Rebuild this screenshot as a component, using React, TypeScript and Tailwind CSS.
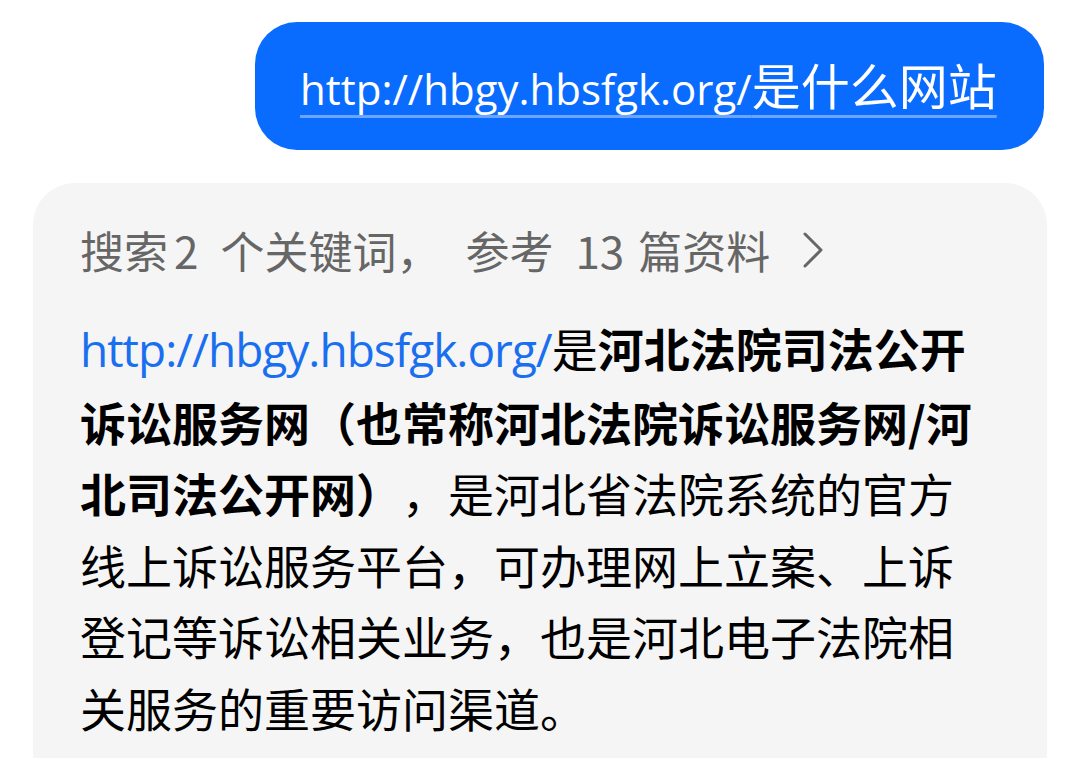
import React from 'react'

const cjk = "font-['Noto_Sans_CJK_SC',sans-serif]"

export default function App() {
  return (
    <div className={`min-h-[758px] w-[1080px] overflow-hidden bg-white ${cjk} [text-spacing-trim:space-all]`}>
      {/* user question bubble */}
      <div className="flex justify-end pr-[36px] pt-[22px]">
        <div className="flex h-[128px] w-[789px] items-center rounded-[42px] bg-[#0a6bff] pl-[45px]">
          <span className="text-[49px] leading-[60px] text-white underline decoration-[#6aa6ff] decoration-[3px] underline-offset-[10px] [text-decoration-skip-ink:none]">
            <span className="font-['Open_Sans',sans-serif] text-[42px]">http://hbgy.hbsfgk.org/</span>是什么网站
          </span>
        </div>
      </div>

      {/* answer card */}
      <div className="mx-[33px] mt-[33px] h-[600px] rounded-t-[42px] bg-[#f5f5f5] pl-[47px] pt-[37px]">
        <div className="flex h-[60px] items-center text-[44px] text-[#666666]">
          <span>
            搜索<span className="ml-[6px] mr-[22px]">2</span>个关键词，<span className="ml-[25px]">参考</span>
            <span className="ml-[22px] mr-[14px]">13</span>篇资料
          </span>
          <svg className="ml-[32px]" width="22" height="36" viewBox="0 0 22 36" fill="none">
            <path d="M3 2 L19 18 L3 34" stroke="#666666" strokeWidth="3" strokeLinecap="round" strokeLinejoin="round" />
          </svg>
        </div>

        <p className="mt-[32px] w-[912px] text-[46px] leading-[71.5px] text-black">
          <span className="font-['Open_Sans',sans-serif] tracking-[-1px] text-[#1a6ff0]">http://hbgy.hbsfgk.org/</span>
          是
          <b className="font-bold">河北法院司法公开诉讼服务网（也常称河北法院诉讼服务网/河北司法公开网）</b>
          ，是河北省法院系统的官方线上诉讼服务平台，可办理网上立案、上诉登记等诉讼相关业务，也是河北电子法院相关服务的重要访问渠道。
        </p>
      </div>
    </div>
  )
}
